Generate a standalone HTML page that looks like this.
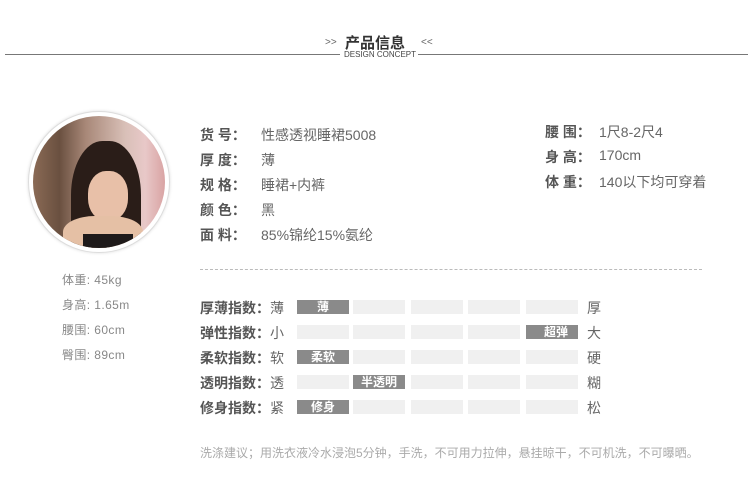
<!DOCTYPE html>
<html><head><meta charset="utf-8"><style>
*{margin:0;padding:0;box-sizing:border-box}
body{width:750px;height:503px;background:#fff;position:relative;overflow:hidden;font-family:"Liberation Sans","Noto Sans CJK SC",sans-serif;color:#555}
.a{position:absolute;white-space:nowrap}
.bar{position:absolute;height:14px;width:52px;background:#f0f0f0}
.on{background:#8a8a8a;color:#fff;font-size:12px;font-weight:bold;line-height:14px;text-align:center}
.lab{font-size:14px;font-weight:bold;color:#555}
.k{font-size:14px;font-weight:bold;color:#555}
.v{font-size:14px;color:#666}
.s{font-size:12px;color:#888;letter-spacing:0.4px}
</style></head><body>
<div class="a" style="left:325px;top:37px;font-size:10px;color:#666">&gt;&gt;</div>
<div class="a" style="left:345px;top:32px;font-size:15px;color:#333;font-weight:bold">产品信息</div>
<div class="a" style="left:421px;top:37px;font-size:10px;color:#666">&lt;&lt;</div>
<div class="a" style="left:5px;top:54px;width:335px;height:1px;background:#777"></div>
<div class="a" style="left:418px;top:54px;width:330px;height:1px;background:#777"></div>
<div class="a" style="left:344px;top:50px;font-size:8px;color:#444">DESIGN CONCEPT</div>

<div class="a" style="left:28px;top:111px;width:142px;height:142px;border-radius:50%;border:1px solid #ddd;background:#fff;box-shadow:0 0 3px #ddd"></div>
<div class="a" style="left:33px;top:116px;width:132px;height:132px;border-radius:50%;overflow:hidden;background:linear-gradient(90deg,#8a6a55 0%,#6a5040 20%,#a88878 40%,#d9c0b8 70%,#e8c8c8 85%,#d9a3a3 100%)">
<div class="a" style="left:38px;top:25px;width:70px;height:120px;border-radius:45% 45% 10% 10%;background:#2a1d18"></div>
<div class="a" style="left:55px;top:55px;width:40px;height:50px;border-radius:45%;background:#e8c0a8"></div>
<div class="a" style="left:30px;top:100px;width:80px;height:40px;border-radius:40% 40% 0 0;background:#e5c0a5"></div>
<div class="a" style="left:50px;top:118px;width:50px;height:20px;background:#1e1a1a"></div>
</div>

<div class="a s" style="left:62px;top:271px">体重: 45kg</div>
<div class="a s" style="left:62px;top:296px">身高: 1.65m</div>
<div class="a s" style="left:62px;top:321px">腰围: 60cm</div>
<div class="a s" style="left:62px;top:346px">臀围: 89cm</div>

<div class="a k" style="left:200px;top:125px">货 号：</div><div class="a v" style="left:261px;top:125px">性感透视睡裙5008</div>
<div class="a k" style="left:200px;top:150px">厚 度：</div><div class="a v" style="left:261px;top:150px">薄</div>
<div class="a k" style="left:200px;top:175px">规 格：</div><div class="a v" style="left:261px;top:175px">睡裙+内裤</div>
<div class="a k" style="left:200px;top:200px">颜 色：</div><div class="a v" style="left:261px;top:200px">黑</div>
<div class="a k" style="left:200px;top:225px">面 料：</div><div class="a v" style="left:261px;top:225px">85%锦纶15%氨纶</div>
<div class="a k" style="left:545px;top:122px">腰 围：</div><div class="a v" style="left:599px;top:122px">1尺8-2尺4</div>
<div class="a k" style="left:545px;top:147px">身 高：</div><div class="a v" style="left:599px;top:147px">170cm</div>
<div class="a k" style="left:545px;top:172px">体 重：</div><div class="a v" style="left:599px;top:172px">140以下均可穿着</div>

<div class="a" style="left:200px;top:269px;width:502px;border-top:1px dashed #bbb"></div>

<div class="a lab" style="left:200px;top:298px">厚薄指数：<span style="font-weight:normal;color:#666">薄</span></div>
<div class="bar on" style="left:297px;top:300px">薄</div><div class="bar" style="left:353px;top:300px"></div><div class="bar" style="left:411px;top:300px"></div><div class="bar" style="left:468px;top:300px"></div><div class="bar" style="left:526px;top:300px"></div>
<div class="a v" style="left:587px;top:298px">厚</div>

<div class="a lab" style="left:200px;top:323px">弹性指数：<span style="font-weight:normal;color:#666">小</span></div>
<div class="bar" style="left:297px;top:325px"></div><div class="bar" style="left:353px;top:325px"></div><div class="bar" style="left:411px;top:325px"></div><div class="bar" style="left:468px;top:325px"></div><div class="bar on" style="left:526px;top:325px;text-align:right;padding-right:10px">超弹</div>
<div class="a v" style="left:587px;top:323px">大</div>

<div class="a lab" style="left:200px;top:348px">柔软指数：<span style="font-weight:normal;color:#666">软</span></div>
<div class="bar on" style="left:297px;top:350px">柔软</div><div class="bar" style="left:353px;top:350px"></div><div class="bar" style="left:411px;top:350px"></div><div class="bar" style="left:468px;top:350px"></div><div class="bar" style="left:526px;top:350px"></div>
<div class="a v" style="left:587px;top:348px">硬</div>

<div class="a lab" style="left:200px;top:373px">透明指数：<span style="font-weight:normal;color:#666">透</span></div>
<div class="bar" style="left:297px;top:375px"></div><div class="bar on" style="left:353px;top:375px">半透明</div><div class="bar" style="left:411px;top:375px"></div><div class="bar" style="left:468px;top:375px"></div><div class="bar" style="left:526px;top:375px"></div>
<div class="a v" style="left:587px;top:373px">糊</div>

<div class="a lab" style="left:200px;top:398px">修身指数：<span style="font-weight:normal;color:#666">紧</span></div>
<div class="bar on" style="left:297px;top:400px">修身</div><div class="bar" style="left:353px;top:400px"></div><div class="bar" style="left:411px;top:400px"></div><div class="bar" style="left:468px;top:400px"></div><div class="bar" style="left:526px;top:400px"></div>
<div class="a v" style="left:587px;top:398px">松</div>

<div class="a" style="left:200px;top:444px;font-size:12px;color:#aaa">洗涤建议；用洗衣液冷水浸泡5分钟，手洗，不可用力拉伸，悬挂晾干，不可机洗，不可曝晒。</div>
</body></html>
